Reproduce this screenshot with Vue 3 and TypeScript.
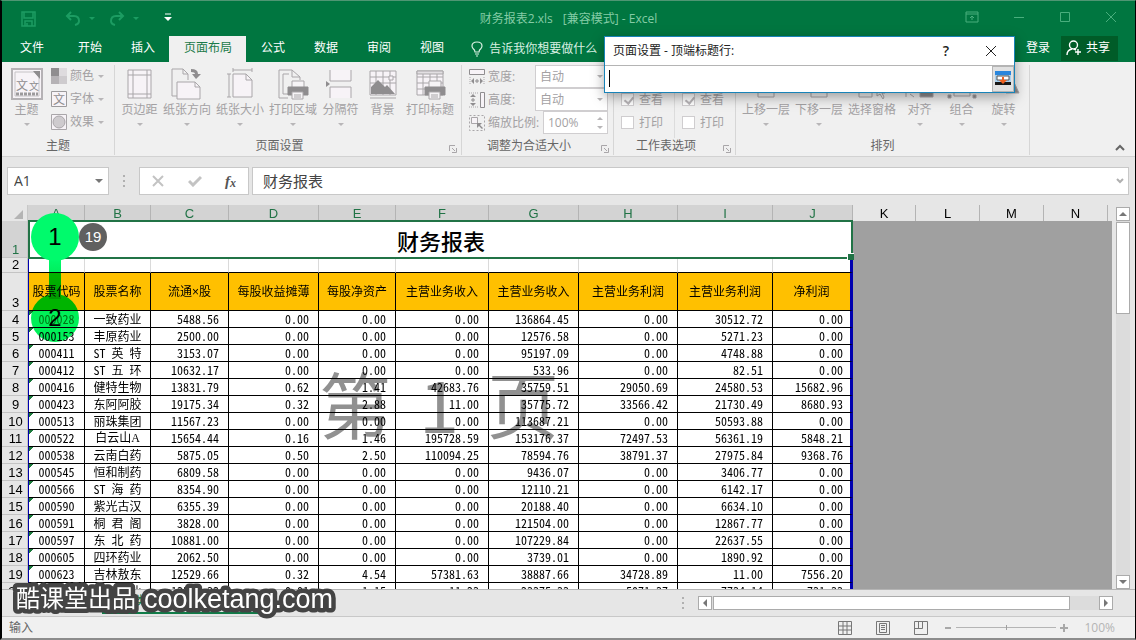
<script setup lang="ts">
import { ref } from 'vue'

interface Shape {
  d: string
  fill?: string
  stroke?: string
}
interface BigTool {
  label: string
  shapes: Shape[]
  caret: boolean
}

const line = '#a9a6a9'
const solid = '#8f8d8f'

const printer: Shape[] = [
  { d: 'M15 20V13H27V20', fill: '#f6f4f6' },
  { d: 'M11 19H31V27H11Z', fill: solid, stroke: solid },
  { d: 'M15 24H26V31H15Z', fill: '#f6f4f6' },
  { d: 'M17 27H24M17 29H24' },
]

const pageTools: BigTool[] = [
  { label: '页边距', caret: true, shapes: [{ d: 'M4 2H27V30H4Z', fill: '#f7f3f7' }, { d: 'M9 2V30M23 2V30M4 7H27M4 26H27' }] },
  {
    label: '纸张方向',
    caret: true,
    shapes: [
      { d: 'M6 28H1V1H12L17 6V12' },
      { d: 'M12 1V6H17' },
      { d: 'M6 14H24L29 19V31H6Z', fill: '#f7f3f7' },
      { d: 'M24 14V19H29' },
      { d: 'M20 1Q27 1 27 6H30L25 11L21 6H24Q24 4 20 4Z', fill: solid, stroke: 'none' },
    ],
  },
  {
    label: '纸张大小',
    caret: true,
    shapes: [
      { d: 'M9 2H28M9 0V4M28 0V4M5 6V29M3 6H7M3 29H7' },
      { d: 'M9 6H22L28 12V29H9Z', fill: '#f7f3f7' },
      { d: 'M22 6V12H28' },
    ],
  },
  {
    label: '打印区域',
    caret: true,
    shapes: [{ d: 'M11 30H2V2H15L23 9V12' }, { d: 'M15 2V9H23M11 26H6V6H12' }, ...printer],
  },
  {
    label: '分隔符',
    caret: true,
    shapes: [
      { d: 'M5 2V13H26V2', fill: '#f7f3f7' },
      { d: 'M5 30V19H26V30', fill: '#f7f3f7' },
      { d: 'M1 13L5 16L1 19Z', fill: solid, stroke: 'none' },
    ],
  },
  {
    label: '背景',
    caret: false,
    shapes: [
      { d: 'M3 3H29V27H3Z', fill: '#f7f3f7' },
      { d: 'M9 3V27M16 3V27M23 3V27M3 9H29M3 15H29' },
      { d: 'M4 26V19L11 12L18 19L20 17L28 26Z', fill: solid, stroke: 'none' },
      { d: 'M22 8H26V12H22Z', fill: '#f7f3f7' },
      { d: 'M3 30H29' },
    ],
  },
  {
    label: '打印标题',
    caret: false,
    shapes: [
      { d: 'M3 3H29V27H3Z', fill: '#f7f3f7' },
      { d: 'M9 3V27M16 3V27M23 3V27M3 9H29M3 15H29M3 21H29' },
      { d: 'M3 3H29V6H3Z', fill: '#e2dfe2' },
      ...printer,
    ],
  },
]

const arrangeTools: BigTool[] = [
  { label: '上移一层', caret: true, shapes: [{ d: 'M8 12H24V29H8Z' }] },
  { label: '下移一层', caret: true, shapes: [{ d: 'M8 12H24V29H8Z' }] },
  { label: '选择窗格', caret: false, shapes: [{ d: 'M3 12H16V29H3Z' }, { d: 'M21 18V28L24 26L27 31L28 29L26 25H29Z' }] },
  { label: '对齐', caret: true, shapes: [{ d: 'M2 8V29M6 26L10 29' }, { d: 'M16 22H29V29H16Z', fill: solid }] },
  { label: '组合', caret: true, shapes: [{ d: 'M8 12H24V28H8Z' }, { d: 'M2 27H5V30H2ZM27 27H30V30H27Z', fill: solid }] },
  { label: '旋转', caret: true, shapes: [{ d: 'M18 25H31L24 10Z', fill: solid }] },
]

const tabs = ['开始', '插入', '页面布局', '公式', '数据', '审阅', '视图']
const activeTab = ref('页面布局')

const columns = ['A', 'B', 'C', 'D', 'E', 'F', 'G', 'H', 'I', 'J']
const outer = ['K', 'L', 'M', 'N', '']
const heads = ['股票代码', '股票名称', '流通×股', '每股收益摊薄', '每股净资产', '主营业务收入', '主营业务收入', '主营业务利润', '主营业务利润', '净利润']

const z = '0.00'
const rows: string[][] = [
  ['000028', '一致药业', '5488.56', z, z, z, '136864.45', z, '30512.72', z],
  ['000153', '丰原药业', '2500.00', z, z, z, '12576.58', z, '5271.23', z],
  ['000411', 'ST 英 特', '3153.07', z, z, z, '95197.09', z, '4748.88', z],
  ['000412', 'ST 五 环', '10632.17', z, z, z, '533.96', z, '82.51', z],
  ['000416', '健特生物', '13831.79', '0.62', '1.41', '42683.76', '35759.51', '29050.69', '24580.53', '15682.96'],
  ['000423', '东阿阿胶', '19175.34', '0.32', '2.88', '11.00', '35775.72', '33566.42', '21730.49', '8680.93'],
  ['000513', '丽珠集团', '11567.23', z, z, z, '113687.21', z, '50593.88', z],
  ['000522', '白云山A', '15654.44', '0.16', '1.46', '195728.59', '153176.37', '72497.53', '56361.19', '5848.21'],
  ['000538', '云南白药', '5875.05', '0.50', '2.50', '110094.25', '78594.76', '38791.37', '27975.84', '9368.76'],
  ['000545', '恒和制药', '6809.58', z, z, z, '9436.07', z, '3406.77', z],
  ['000566', 'ST 海 药', '8354.90', z, z, z, '12110.21', z, '6142.17', z],
  ['000590', '紫光古汉', '6355.39', z, z, z, '20188.40', z, '6634.10', z],
  ['000591', '桐 君 阁', '3828.00', z, z, z, '121504.00', z, '12867.77', z],
  ['000597', '东 北 药', '10881.00', z, z, z, '107229.84', z, '22637.55', z],
  ['000605', '四环药业', '2062.50', z, z, z, '3739.01', z, '1890.92', z],
  ['000623', '吉林敖东', '12529.66', '0.32', '4.54', '57381.63', '38887.66', '34728.89', '11.00', '7556.20'],
  ['000627', '百科药业', '13511.33', '0.01', '1.15', '11.23', '23375.33', '5071.37', '7734.14', '731.33'],
]

const title = '财务报表'
const scale = ref('100%')
const zoomLevel = ref(50)
const rangeRef = ref('')
const printGrid = ref(false)
const printHead = ref(false)
const viewGrid = ref(true)
const viewHead = ref(true)
</script>

<template>
  <div class="window">
    <header class="titlebar">
      <div class="quick">
        <button class="plain save" aria-label="保存">
          <svg width="16" height="16" viewBox="0 0 16 16"><path d="M1 1H14V15H1ZM3 1V7H12V1M4 15V10H11V15M6 12V15" fill="none" stroke="#1c9c62" stroke-width="1.5" /></svg>
        </button>
        <button class="plain undo" aria-label="撤消">
          <svg width="32" height="16" viewBox="0 0 32 16"><path d="M6 1L2 5L6 9M2 5H9Q14 5 14 10Q14 13 10 14" fill="none" stroke="#1c9c62" stroke-width="2" /><path d="M24 6H30L27 9Z" fill="#1c9c62" /></svg>
        </button>
        <button class="plain redo" aria-label="恢复">
          <svg width="32" height="16" viewBox="0 0 32 16"><path d="M10 1L14 5L10 9M14 5H7Q2 5 2 10Q2 13 6 14" fill="none" stroke="#1c9c62" stroke-width="2" /><path d="M24 6H30L27 9Z" fill="#1c9c62" /></svg>
        </button>
        <button class="plain more" aria-label="自定义快速访问工具栏">
          <svg width="10" height="10" viewBox="0 0 10 10"><path d="M2 1H8" stroke="#fff" /><path d="M1 4H9L5 8Z" fill="#fff" /></svg>
        </button>
      </div>
      <h1 class="caption"><span>财务报表2.xls</span><span>[兼容模式] - Excel</span></h1>
      <div class="winbtns">
        <button class="plain" aria-label="功能区显示选项">
          <svg width="14" height="12" viewBox="0 0 14 12"><path d="M1 1H13V11H1ZM1 3H13M7 9V5M5 7L7 5L9 7" fill="none" stroke="#49ae7d" /></svg>
        </button>
        <button class="plain" aria-label="最小化"><svg width="12" height="12" viewBox="0 0 12 12"><path d="M1 6.500H11" stroke="#49ae7d" /></svg></button>
        <button class="plain" aria-label="最大化"><svg width="12" height="12" viewBox="0 0 12 12"><path d="M1.500 1.500H10.500V10.500H1.500Z" fill="none" stroke="#49ae7d" /></svg></button>
        <button class="plain" aria-label="关闭"><svg width="12" height="12" viewBox="0 0 12 12"><path d="M1 1L11 11M11 1L1 11" stroke="#49ae7d" /></svg></button>
      </div>
    </header>

    <nav class="tabs">
      <button class="tab file">文件</button>
      <button v-for="t in tabs" :key="t" class="tab" :class="{ active: t === activeTab }" @click="activeTab = t">{{ t }}</button>
      <button class="tell">
        <svg width="12" height="16" viewBox="0 0 12 16"><path d="M4 11Q4 9 2 7.500Q1 6 1 5Q1 1 6 1Q11 1 11 5Q11 6 10 7.500Q8 9 8 11ZM4 13H8M5 15H7" fill="none" stroke="#d8f0e2" stroke-width="1.200" /></svg>
        <span>告诉我你想要做什么</span>
      </button>
      <span class="grow"></span>
      <button class="login">登录</button>
      <button class="share">
        <svg width="16" height="16" viewBox="0 0 16 16"><circle cx="7.500" cy="5" r="4" fill="none" stroke="#fff" stroke-width="1.400" /><path d="M1 15Q1 10 6 9M8 9L10 10M12 9V15M9 12H15" fill="none" stroke="#fff" stroke-width="1.400" /></svg>
        <span>共享</span>
      </button>
    </nav>

    <section class="ribbon">
      <div class="group theme">
        <div class="body">
          <button class="tool big">
            <svg width="32" height="32" viewBox="0 0 32 32">
              <path d="M1 1H31V31H1Z" fill="#f7f3f7" stroke="#b5b2b5" stroke-width="2" />
              <path d="M4 4H23L28 9V28H4Z" fill="none" stroke="#c6c3c6" />
              <path d="M22 3H29V11Z" fill="#8f8d8f" />
              <text x="5" y="22" class="glyph mid">文</text>
              <text x="18" y="22" class="glyph tiny">文</text>
              <path d="M5 26H27" stroke="#9c9a9c" stroke-width="3" stroke-dasharray="3 1" />
            </svg>
            <span>主题</span>
            <i class="caret"></i>
          </button>
          <div class="stack">
            <button class="tool small">
              <svg width="16" height="16" viewBox="0 0 16 16"><path d="M0 0H8V8H0Z" fill="#8f8d8f" /><path d="M8 0H16V8H8Z" fill="#dedbde" /><path d="M0 8H8V16H0Z" fill="#b5b2b5" /><path d="M8 8H16V16H8Z" fill="#cecbce" /></svg>
              <span>颜色</span><i class="caret"></i>
            </button>
            <button class="tool small">
              <svg width="16" height="16" viewBox="0 0 16 16"><path d="M.5 .5H15.500V15.500H.5Z" fill="#f7f3f7" stroke="#9c9a9c" /><text x="2" y="13" class="glyph mid">文</text></svg>
              <span>字体</span><i class="caret"></i>
            </button>
            <button class="tool small">
              <svg width="16" height="16" viewBox="0 0 16 16"><path d="M.5 .5H15.500V15.500H.5Z" fill="#f7f3f7" stroke="#a9a6a9" /><circle cx="8" cy="8" r="6" fill="#cecbce" stroke="#a9a6a9" /></svg>
              <span>效果</span><i class="caret"></i>
            </button>
          </div>
        </div>
        <div class="foot">主题</div>
      </div>

      <div class="group page">
        <div class="body">
          <button v-for="b in pageTools" :key="b.label" class="tool big">
            <svg width="32" height="32" viewBox="0 0 32 32"><path v-for="(s, i) in b.shapes" :key="i" :d="s.d" :fill="s.fill || 'none'" :stroke="s.stroke || line" /></svg>
            <span>{{ b.label }}</span>
            <i v-if="b.caret" class="caret"></i>
          </button>
        </div>
        <div class="foot">页面设置<svg class="launch" width="8" height="8" viewBox="0 0 8 8"><path d="M.5 6V.5H6M3 3L6 6M7.500 3V7.500H3" fill="none" stroke="#a9a6a9" /></svg></div>
      </div>

      <div class="group fit">
        <div class="rows">
          <div class="row">
            <svg width="16" height="16" viewBox="0 0 16 16"><path d="M.5 .5H15.500V5.500H.5Z" fill="#f7f3f7" stroke="#8f8d8f" /><path d="M1 8V15M15 8V15" stroke="#a9a6a9" stroke-dasharray="1 1" /><path d="M2 12L5 9V15ZM14 12L11 9V15Z" fill="#8f8d8f" /><path d="M7 11H9V13H7Z" fill="none" stroke="#8f8d8f" /></svg>
            <label for="w">宽度:</label>
            <span class="drop"><select id="w"><option>自动</option></select><i class="caret"></i></span>
          </div>
          <div class="row">
            <svg width="16" height="16" viewBox="0 0 16 16"><path d="M11.500 .5H15.500V15.500H11.500Z" fill="#f7f3f7" stroke="#8f8d8f" /><path d="M0 1H9M0 15H9" stroke="#a9a6a9" stroke-dasharray="1 1" /><path d="M4 2L7 5H1ZM4 14L7 11H1Z" fill="#8f8d8f" /><path d="M3 7H5V9H3Z" fill="none" stroke="#8f8d8f" /></svg>
            <label for="h">高度:</label>
            <span class="drop"><select id="h"><option>自动</option></select><i class="caret"></i></span>
          </div>
          <div class="row">
            <svg width="16" height="16" viewBox="0 0 16 16"><path d="M.5 .5H15.500V15.500H.5Z" fill="none" stroke="#a9a6a9" stroke-dasharray="2 2" /><path d="M2.500 2.500H8.500V8.500H2.500Z" fill="#f7f3f7" stroke="#a9a6a9" /><path d="M8 8H13L11 10L14 13L13 14L10 11L8 13Z" fill="#8f8d8f" /></svg>
            <label for="s">缩放比例:</label>
            <span class="spin"><input id="s" v-model="scale" type="text" /><i class="caret up"></i><i class="caret down"></i></span>
          </div>
        </div>
        <div class="foot">调整为合适大小<svg class="launch" width="8" height="8" viewBox="0 0 8 8"><path d="M.5 6V.5H6M3 3L6 6M7.500 3V7.500H3" fill="none" stroke="#a9a6a9" /></svg></div>
      </div>

      <div class="group options">
        <div class="checks">
          <div class="checkcol">
            <label><input v-model="viewGrid" type="checkbox" />查看</label>
            <label><input v-model="printGrid" type="checkbox" />打印</label>
          </div>
          <div class="checkcol">
            <label><input v-model="viewHead" type="checkbox" />查看</label>
            <label><input v-model="printHead" type="checkbox" />打印</label>
          </div>
        </div>
        <div class="foot">工作表选项<svg class="launch" width="8" height="8" viewBox="0 0 8 8"><path d="M.5 6V.5H6M3 3L6 6M7.500 3V7.500H3" fill="none" stroke="#a9a6a9" /></svg></div>
      </div>

      <div class="group arrange">
        <div class="body">
          <button v-for="b in arrangeTools" :key="b.label" class="tool big">
            <svg width="32" height="32" viewBox="0 0 32 32"><path v-for="(s, i) in b.shapes" :key="i" :d="s.d" :fill="s.fill || 'none'" :stroke="s.stroke || line" /></svg>
            <span>{{ b.label }}</span>
            <i v-if="b.caret" class="caret"></i>
          </button>
        </div>
        <div class="foot">排列</div>
      </div>
      <button class="plain collapse" aria-label="折叠功能区">
        <svg width="10" height="8" viewBox="0 0 10 8"><path d="M1 6L5 2L9 6" fill="none" stroke="#666" stroke-width="2" /></svg>
      </button>
    </section>

    <div class="formulabar">
      <div class="namebox"><input type="text" value="A1" aria-label="名称框" /><i class="caret dark"></i></div>
      <svg class="dots" width="2" height="12" viewBox="0 0 2 12"><path d="M0 0H2V2H0ZM0 5H2V7H0ZM0 10H2V12H0Z" fill="#b0b0b0" /></svg>
      <div class="fxbox">
        <button class="plain" aria-label="取消"><svg width="12" height="12" viewBox="0 0 12 12"><path d="M1 1L11 11M11 1L1 11" stroke="#c3c3c3" stroke-width="2" /></svg></button>
        <button class="plain" aria-label="输入"><svg width="14" height="12" viewBox="0 0 14 12"><path d="M1 6L5 10L13 2" fill="none" stroke="#c3c3c3" stroke-width="3" /></svg></button>
        <button class="plain fx" aria-label="插入函数">f<small>x</small></button>
      </div>
      <div class="content">
        <input type="text" :value="title" aria-label="编辑栏" />
        <svg width="8" height="6" viewBox="0 0 8 6"><path d="M1 1L4 4L7 1" fill="none" stroke="#b0b0b0" stroke-width="2" /></svg>
      </div>
    </div>

    <main class="sheet">
      <div class="grid">
        <table>
          <colgroup>
            <col class="c0" />
            <col v-for="c in columns" :key="c" :class="'c' + c" />
            <col class="cK" /><col class="cL" /><col class="cL" /><col class="cL" /><col />
          </colgroup>
          <thead>
            <tr>
              <th class="corner"><svg width="9" height="9" viewBox="0 0 9 9"><path d="M9 0V9H0Z" fill="#b4b4b4" /></svg></th>
              <th v-for="c in columns" :key="c" class="on">{{ c }}</th>
              <th v-for="c in outer" :key="c">{{ c }}</th>
            </tr>
          </thead>
          <tbody>
            <tr class="r1">
              <th class="on">1</th>
              <td colspan="10" class="title">{{ title }}</td>
              <td class="void" colspan="5" :rowspan="rows.length + 3"></td>
            </tr>
            <tr class="r2">
              <th>2</th>
              <td v-for="c in columns" :key="c"></td>
            </tr>
            <tr class="r3">
              <th>3</th>
              <td v-for="(h, i) in heads" :key="i">{{ h }}</td>
            </tr>
            <tr v-for="(r, n) in rows" :key="n" class="data">
              <th>{{ n + 4 }}</th>
              <td v-for="(v, i) in r" :key="i" :class="{ share: v.endsWith('A') }">{{ v }}</td>
            </tr>
          </tbody>
        </table>
        <div class="watermark"><span>第</span><span>1</span><span>页</span></div>
        <div class="link"></div>
        <div class="step one">1</div>
        <div class="step two">2</div>
        <div class="count">19</div>
      </div>
      <div class="vscroll">
        <button class="sbtn" aria-label="向上滚动"><svg width="8" height="4" viewBox="0 0 8 4"><path d="M0 4L4 0L8 4Z" fill="#777" /></svg></button>
        <div class="thumb"></div>
        <span class="grow"></span>
        <button class="sbtn" aria-label="向下滚动"><svg width="8" height="4" viewBox="0 0 8 4"><path d="M0 0L4 4L8 0Z" fill="#777" /></svg></button>
      </div>
    </main>

    <div class="sheetbar">
      <button class="sheettab">××类上市公司财务指标</button>
      <svg class="subtitle" width="340" height="40" viewBox="0 0 340 40">
        <text x="8" y="27" class="cn">酷课堂出品</text>
        <text x="136" y="28" class="en">coolketang.com</text>
      </svg>
      <span class="grow"></span>
      <svg class="dots" width="2" height="12" viewBox="0 0 2 12"><path d="M0 0H2V2H0ZM0 5H2V7H0ZM0 10H2V12H0Z" fill="#b0b0b0" /></svg>
      <div class="hscroll">
        <button class="sbtn" aria-label="向左滚动"><svg width="4" height="8" viewBox="0 0 4 8"><path d="M4 0L0 4L4 8Z" fill="#777" /></svg></button>
        <div class="thumb"></div>
        <span class="track"></span>
        <button class="sbtn" aria-label="向右滚动"><svg width="4" height="8" viewBox="0 0 4 8"><path d="M0 0L4 4L0 8Z" fill="#777" /></svg></button>
      </div>
    </div>

    <footer class="status">
      <span>输入</span>
      <span class="grow"></span>
      <div class="views">
        <button class="plain" aria-label="普通"><svg width="14" height="14" viewBox="0 0 14 14"><path d="M.5 .5H13.500V13.500H.5ZM5 .5V13.500M9 .5V13.500M.5 5H13.500M.5 9H13.500" fill="none" stroke="#777" /></svg></button>
        <button class="plain" aria-label="页面布局"><svg width="14" height="14" viewBox="0 0 14 14"><path d="M.5 .5H13.500V13.500H.5ZM3.500 2.500H10.500V11.500H3.500ZM5 4.500H9M5 6.500H9M5 8.500H9" fill="none" stroke="#777" /></svg></button>
        <button class="plain" aria-label="分页预览"><svg width="14" height="14" viewBox="0 0 14 14"><path d="M.5 .5H13.500V13.500H.5ZM.5 7.500H8.500V.5M4.500 .5V7.500" fill="none" stroke="#777" /></svg></button>
      </div>
      <div class="zoom">
        <button class="plain" aria-label="缩小"><svg width="8" height="8" viewBox="0 0 8 8"><path d="M1 4H7" stroke="#a8a8a8" stroke-width="2" /></svg></button>
        <input v-model="zoomLevel" type="range" min="0" max="100" aria-label="缩放" />
        <button class="plain" aria-label="放大"><svg width="8" height="8" viewBox="0 0 8 8"><path d="M0 4H8M4 0V8" stroke="#a8a8a8" stroke-width="2" /></svg></button>
        <span class="pct">100%</span>
      </div>
    </footer>

    <div class="dialog" role="dialog" aria-label="页面设置">
      <div class="dhead">
        <label for="rng">页面设置 - 顶端标题行:</label>
        <span class="grow"></span>
        <button class="plain q" aria-label="帮助">?</button>
        <button class="plain x" aria-label="关闭"><svg width="12" height="12" viewBox="0 0 12 12"><path d="M1 1L11 11M11 1L1 11" stroke="#222" /></svg></button>
      </div>
      <div class="dbody">
        <input id="rng" v-model="rangeRef" type="text" />
        <i class="cursor"></i>
        <button class="pick" aria-label="展开对话框">
          <svg width="16" height="14" viewBox="0 0 16 14"><path d="M0 0H16V14H0Z" fill="#a8d0ee" /><path d="M0 0H16V4H0Z" fill="#2a86dc" /><path d="M0 11H16V14H0Z" fill="#181818" /><path d="M2 5H14V9H2Z" fill="#fff" stroke="#555" /><path d="M7 6H9V9H12L8 13L4 9H7Z" fill="#f0601e" /></svg>
        </button>
      </div>
    </div>
  </div>
</template>

<style>
body {
  margin: 0;
  background: #000;
}
</style>

<style scoped>
* {
  box-sizing: border-box;
}
.window {
  position: relative;
  display: flex;
  flex-direction: column;
  height: 100vh;
  overflow: hidden;
  border: solid #000;
  border-width: 1px 1px 2px 2px;
  border-top-color: #4f9673;
  border-bottom-color: #8c8c8c;
  background: #e6e6e6;
  color: #444;
  font: 12px/16px 'Open Sans', 'Noto Sans CJK SC', sans-serif;
}
button,
input,
select {
  margin: 0;
  padding: 0;
  border: 0;
  border-radius: 0;
  outline: 0;
  background: none;
  color: inherit;
  font: inherit;
}
svg {
  display: block;
  flex: none;
}
.plain {
  display: flex;
  align-items: center;
  justify-content: center;
}
.grow {
  flex: 1;
}

/* title bar */
.titlebar {
  display: grid;
  grid-template-columns: 1fr auto 1fr;
  align-items: center;
  height: 35px;
  flex: none;
  background: #007640;
}
.quick {
  display: flex;
  align-items: center;
  padding-left: 19px;
}
.undo {
  margin-left: 28px;
}
.redo {
  margin-left: 12px;
}
.more {
  margin: 0 0 2px 22px;
}
.caption {
  display: flex;
  gap: 10px;
  margin: 0;
  color: #84cca6;
  font-size: 12px;
  font-weight: 400;
}
.winbtns {
  display: flex;
  justify-content: flex-end;
  gap: 34px;
  padding: 0 18px 4px 0;
}

/* tabs */
.tabs {
  display: flex;
  height: 26px;
  flex: none;
  background: #007640;
  color: #fff;
}
.tab {
  padding: 0 14px 2px 15px;
}
.tab.file {
  padding: 0 19px 2px 18px;
}
.tab.active {
  background: #f0f0f0;
  color: #1b7a49;
}
.tell {
  display: flex;
  align-items: center;
  gap: 6px;
  padding-left: 13px;
  color: #d8f0e2;
}
.login {
  padding: 0 11px 2px;
}
button.share {
  display: flex;
  align-items: center;
  gap: 4px;
  height: 25px;
  margin-right: 17px;
  padding: 0 8px 2px 5px;
  background: #005c28;
}

/* ribbon */
.ribbon {
  position: relative;
  display: flex;
  height: 95px;
  flex: none;
  padding: 3px 0 1px;
  border-bottom: 1px solid #d2d2d2;
  background: #f0f0f0;
  color: #a3a1a3;
}
.group {
  position: relative;
  display: flex;
  flex-direction: column;
  border-right: 1px solid #d6d6d6;
}
.theme {
  width: 113px;
}
.page {
  width: 347px;
}
.fit {
  width: 152px;
}
.options {
  width: 122px;
}
.arrange {
  width: 294px;
}
.body {
  display: flex;
  flex: 1;
  min-height: 0;
  gap: 5px;
  padding: 3px 0 0 6px;
}
.tool {
  display: flex;
  align-items: center;
  white-space: nowrap;
}
.big {
  flex-direction: column;
  justify-content: flex-start;
  min-width: 37px;
}
.big span {
  margin: 2px 0 5px;
}
.theme .body {
  gap: 6px;
}
.stack {
  display: flex;
  flex-direction: column;
}
.small {
  gap: 3px;
  height: 23px;
  flex: none;
  padding-bottom: 7px;
}
.glyph {
  fill: #8f8d8f;
  font-family: 'Noto Sans CJK SC', sans-serif;
}
.mid {
  font-size: 12px;
}
.tiny {
  font-size: 10px;
}
.caret {
  display: inline-block;
  width: 0;
  height: 0;
  border: 3px solid transparent;
  border-top-color: #b8b6b8;
  border-bottom: 0;
}
.caret.dark {
  border-width: 4px;
  border-bottom: 0;
  border-top-color: #777;
}
.small .caret {
  margin-left: 1px;
}
.foot {
  height: 16px;
  flex: none;
  margin-bottom: 1px;
  color: #666;
  text-align: center;
}
.page .foot,
.fit .foot,
.options .foot {
  padding-right: 17px;
}
.launch {
  position: absolute;
  right: 4px;
  bottom: 2px;
}
.rows {
  flex: 1;
  padding-left: 7px;
}
.row {
  display: flex;
  align-items: center;
  height: 23px;
  gap: 3px;
}
.drop,
.spin {
  position: relative;
  width: 73px;
  height: 23px;
  margin: 0 5px 0 auto;
}
.spin {
  width: 65px;
}
.row select,
.row input {
  width: 100%;
  height: 100%;
  padding: 0 4px;
  border: 1px solid #d0ced0;
  background: #fff;
  appearance: none;
}
.drop .caret {
  position: absolute;
  right: 5px;
  top: 10px;
}
.spin .caret {
  position: absolute;
  right: 5px;
}
.spin .up {
  top: 6px;
  transform: rotate(180deg);
}
.spin .down {
  bottom: 5px;
}
.checks {
  display: flex;
  flex: 1;
  padding: 23px 0 0 7px;
}
.checkcol {
  display: flex;
  flex-direction: column;
  width: 53px;
}
.checkcol + .checkcol {
  padding-left: 7px;
  border-left: 1px solid #dcdcdc;
}
.checkcol label {
  display: flex;
  align-items: center;
  gap: 5px;
  height: 23px;
  white-space: nowrap;
}
.checkcol:last-child {
  width: auto;
}
.checks input {
  position: relative;
  width: 13px;
  height: 13px;
  border: 1px solid #cfcdcf;
  background: #fff;
  appearance: none;
}
.checks input:checked::after {
  content: '';
  position: absolute;
  left: 4px;
  top: 1px;
  width: 4px;
  height: 7px;
  border: solid #b9b6b9;
  border-width: 0 2px 2px 0;
  transform: rotate(40deg);
}
.collapse {
  position: absolute;
  right: 10px;
  bottom: 4px;
}

/* formula bar */
.formulabar {
  display: flex;
  align-items: center;
  height: 48px;
  flex: none;
  padding: 0 6px 0 5px;
}
.namebox,
.fxbox,
.content {
  display: flex;
  align-items: center;
  height: 28px;
  border: 1px solid #c8c8c8;
  background: #fff;
}
.namebox {
  width: 102px;
  padding: 0 5px 0 6px;
}
.namebox input {
  flex: 1;
  min-width: 0;
  font-size: 14px;
}
.formulabar .dots {
  margin: 0 14px;
}
.fxbox {
  justify-content: space-between;
  width: 110px;
  padding: 0 12px;
}
.fx {
  color: #555;
  font: italic bold 15px/16px 'Liberation Serif', serif;
}
.fx small {
  padding-top: 3px;
  font-size: 12px;
}
.content {
  flex: 1;
  margin-left: 3px;
  padding: 0 4px 0 10px;
}
.content input {
  flex: 1;
  font-size: 15px;
}

/* sheet */
.sheet {
  display: flex;
  flex: 1;
  min-height: 0;
}
.grid {
  position: relative;
  flex: 1;
  overflow: hidden;
  isolation: isolate;
}
table {
  width: 100%;
  table-layout: fixed;
  border-collapse: separate;
  border-spacing: 0;
  color: #000;
  font: 12px/16px 'Noto Sans CJK SC', sans-serif;
}
.c0 { width: 26px; }
.cA { width: 57px; }
.cB { width: 66px; }
.cC { width: 78px; }
.cD { width: 90px; }
.cE { width: 77px; }
.cF { width: 93px; }
.cG { width: 90px; }
.cH { width: 99px; }
.cI { width: 95px; }
.cJ { width: 80px; }
.cK { width: 63px; }
.cL { width: 64px; }
th,
td {
  padding: 0;
}
th {
  font: 13px/15px 'Liberation Sans', sans-serif;
}
thead th {
  height: 16px;
  border-right: 1px solid #b4b4b4;
}
thead th:last-child {
  border-right: 0;
}
th.on {
  background: #d3d3d3;
  color: #217346;
}
thead .corner {
  padding: 2px 4px 0 0;
  border-right-color: #c8c8c8;
}
.corner svg {
  margin-left: auto;
}
tbody th {
  padding-left: 2px;
  border-bottom: 1px solid #c4c4c4;
  border-right: 1px solid #c4c4c4;
}
tbody td {
  border: solid #000;
  border-width: 0 1px 1px 0;
  background: #fff;
  font-feature-settings: 'hwid';
  text-align: center;
  white-space: pre;
}
tbody td:nth-child(2) {
  border-left: 1px solid #0000b0;
}
tbody td:nth-child(11) {
  border-right: 3px solid #0000b0;
}
.r1 {
  height: 37px;
}
.r2 {
  height: 15px;
}
.r3 {
  height: 38px;
}
.data {
  height: 17px;
}
.r1 th,
.r3 th {
  vertical-align: bottom;
}
.r2 th {
  line-height: 14px;
}
.r2 td {
  border-right-color: #dadada;
}
.r3 td {
  background: #ffc000;
  font-family: 'Liberation Sans', 'Noto Sans CJK SC', sans-serif;
}
tbody .title {
  position: relative;
  z-index: 1;
  border: 0;
  font-size: 22px;
  line-height: 28px;
  font-weight: 500;
}
.title::before {
  content: '';
  position: absolute;
  inset: -1px 0 -1px -1px;
  border: 2px solid #217346;
}
.title::after {
  content: '';
  position: absolute;
  right: -1px;
  bottom: -2px;
  width: 6px;
  height: 6px;
  border: solid #fff;
  border-width: 1px 0 0 1px;
  background: #217346;
}
tbody .void {
  border: 0;
  background: #a0a0a0;
}
.data td:nth-child(n + 4) {
  padding-right: 9px;
  text-align: right;
}
.data td:nth-child(11) {
  padding-right: 7px;
}
.data td:nth-child(2) {
  background: linear-gradient(135deg, #1c7a3c 3px, transparent 3px) #fff;
}
.r3 + .data td:nth-child(2) {
  color: #147a34;
}
td.share::first-letter {
  font-weight: 400;
}
td.share {
  font-family: 'Liberation Serif', 'Noto Sans CJK SC', serif;
}
.watermark {
  position: absolute;
  left: 317px;
  top: 161px;
  display: flex;
  gap: 28px;
  color: #919191;
  font: 72px/72px 'Noto Sans CJK SC', sans-serif;
  mix-blend-mode: multiply;
  pointer-events: none;
}
.step,
.count,
.link {
  position: absolute;
  z-index: 2;
}
.step {
  left: 29px;
  width: 48px;
  height: 48px;
  border-radius: 50%;
  background: #00fa6c;
  color: #000;
  font: 24px/48px 'Liberation Sans', sans-serif;
  text-align: center;
}
.one {
  top: 8px;
}
.two {
  top: 89px;
  background: #00f058;
  mix-blend-mode: multiply;
}
.link {
  left: 47px;
  top: 54px;
  width: 12px;
  height: 40px;
  background: linear-gradient(#00fa6c, #00d840);
  mix-blend-mode: multiply;
}
.count {
  left: 77px;
  top: 18px;
  width: 28px;
  height: 28px;
  border-radius: 50%;
  background: #606060;
  color: #fff;
  font: 15px/28px 'Liberation Sans', sans-serif;
  text-align: center;
}
.vscroll {
  display: flex;
  flex-direction: column;
  width: 14px;
  margin: 2px 5px 0 4px;
  background: #dcdcdc;
}
.sbtn {
  display: flex;
  align-items: center;
  justify-content: center;
  width: 14px;
  height: 14px;
  border: 1px solid #ababab;
  background: #fff;
}
.thumb {
  border: 1px solid #ababab;
  background: #fff;
}
.vscroll .thumb {
  height: 92px;
  margin-top: 1px;
}

/* sheet tabs */
.sheetbar {
  position: relative;
  z-index: 3;
  display: flex;
  align-items: center;
  height: 28px;
  flex: none;
  border-top: 1px solid #b4b4b4;
  border-bottom: 1px solid #c8c8c8;
}
.sheettab {
  align-self: flex-start;
  height: 24px;
  width: 160px;
  margin-left: 100px;
  border-bottom: 2px solid #107c48;
  color: #107c48;
}
.subtitle {
  position: absolute;
  left: 6px;
  top: -10px;
}
.subtitle text {
  fill: #fff;
  stroke: #444;
  stroke-width: 9px;
  stroke-linejoin: round;
  paint-order: stroke;
}
.cn {
  font-size: 24px;
}
.en {
  font-family: 'Liberation Sans', sans-serif;
  font-size: 27px;
}
.hscroll {
  display: flex;
  width: 415px;
  margin: 0 22px 0 14px;
  background: #dcdcdc;
}
.hscroll .thumb {
  flex: 1;
  margin-left: 1px;
}
.track {
  width: 29px;
}

/* status bar */
.status {
  display: flex;
  align-items: center;
  height: 21px;
  flex: none;
  padding: 0 20px 0 7px;
  background: #f0f0f0;
  color: #666;
}
.views {
  display: flex;
  gap: 24px;
  margin-right: 16px;
}
.zoom {
  display: flex;
  align-items: center;
  gap: 4px;
  color: #b4b4b4;
}
.zoom input {
  width: 100px;
  height: 14px;
  background: linear-gradient(#b4b4b4, #b4b4b4) center / 100% 1px no-repeat;
  appearance: none;
}
.zoom input::-webkit-slider-thumb {
  width: 1px;
  height: 5px;
  background: #a0a0a0;
  appearance: none;
}
.pct {
  margin-left: 12px;
}

/* range picker dialog */
.dialog {
  position: absolute;
  left: 602px;
  top: 35px;
  z-index: 5;
  width: 411px;
  border: 1px solid #1883b8;
  background: #fff;
  color: #222;
  box-shadow: 0 4px 12px rgba(0, 0, 0, 0.35);
}
.dhead {
  display: flex;
  align-items: center;
  height: 29px;
  padding: 0 17px 0 8px;
  border-bottom: 1px solid #b4b4b4;
}
.q {
  margin-right: 36px;
  font-size: 14px;
  font-weight: 600;
}
.dbody {
  position: relative;
  display: flex;
  height: 26px;
}
.dbody input {
  flex: 1;
  min-width: 0;
  padding-left: 5px;
}
.cursor {
  position: absolute;
  left: 4px;
  top: 4px;
  width: 1px;
  height: 17px;
  background: #000;
}
.pick {
  display: flex;
  justify-content: center;
  width: 22px;
  padding-top: 4px;
  border: 1px solid #b4b4b4;
  background: #e1e1e1;
}
</style>
